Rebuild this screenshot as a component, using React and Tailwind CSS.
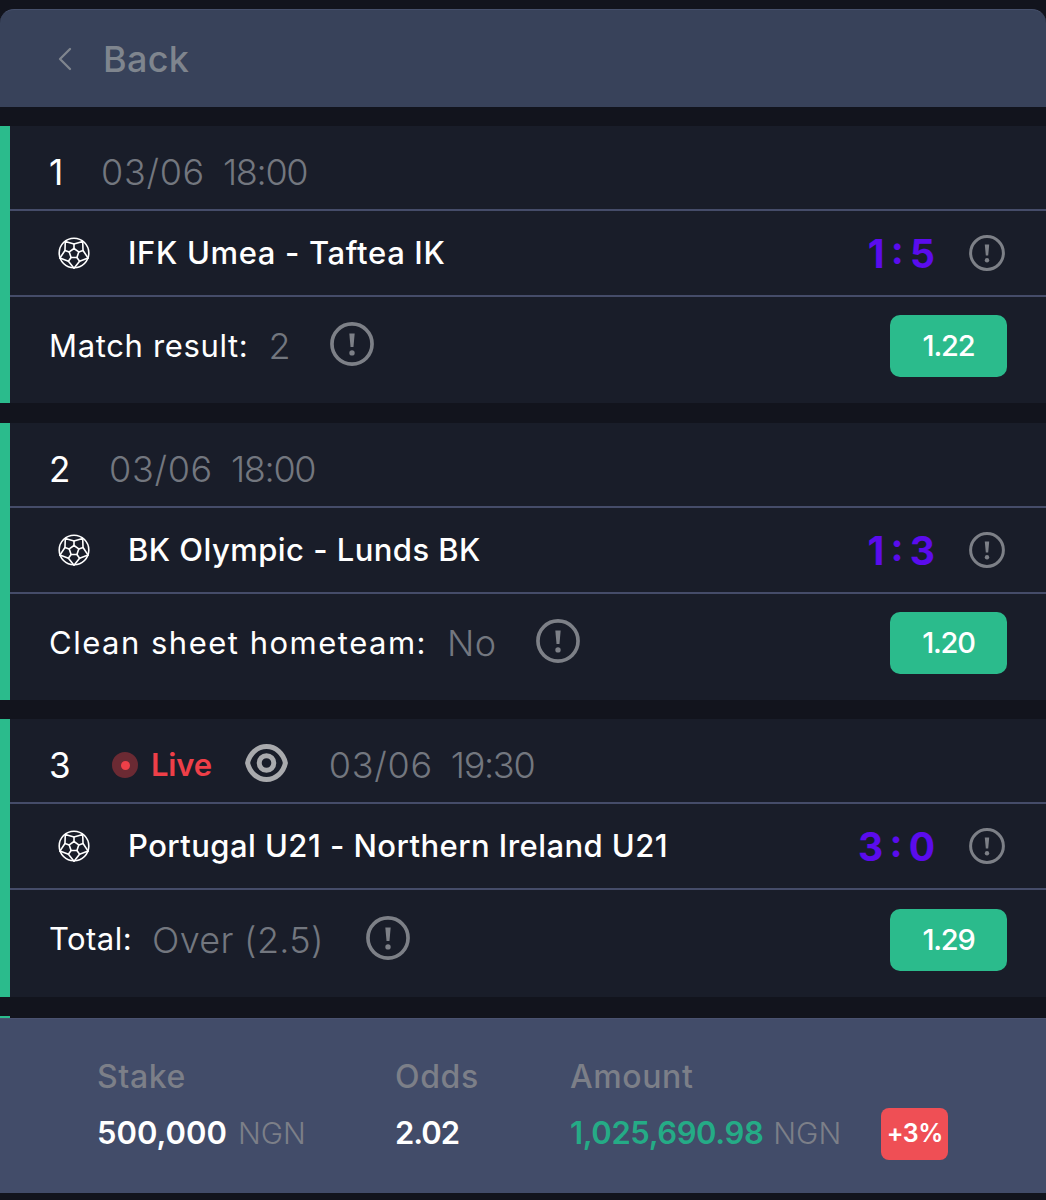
import React from 'react';
import { ChevronLeft } from 'lucide-react';

function Ball() {
  return (
    <svg width="32" height="32" viewBox="0 0 32 32" fill="none" stroke="white" strokeWidth="1.6" strokeLinejoin="round" strokeLinecap="round">
      <circle cx="16" cy="16" r="14.8" />
      <path d="M16 11.500l4.760 3.450-1.820 5.600h-5.880l-1.820-5.600z" />
      <path d="M16 11.500V7M20.760 14.950l4.280-1.390M18.940 20.550l2.640 3.640M13.060 20.550l-2.640 3.640M11.240 14.950l-4.280-1.390" />
      <path d="M7.300 4.500L16 7l8.700-2.500M24.700 4.500l.34 9.060 5.060 7.540M30.100 21.100l-8.520 3.090L16 31.300M16 31.300l-5.580-7.110-8.520-3.090M1.900 21.100l5.060-7.540.34-9.060" />
    </svg>
  );
}

function Alert({ size = 36 }) {
  return (
    <svg width={size} height={size} viewBox="0 0 36 36" fill="none">
      <circle cx="18" cy="18" r="16.400" stroke="#7d8087" strokeWidth="3" />
      <path d="M15.800 9.500h4.400l-1 11h-2.400z" fill="#7d8087" />
      <circle cx="18" cy="25.300" r="2.200" fill="#7d8087" />
    </svg>
  );
}

function Eye() {
  return (
    <svg width="43" height="38" viewBox="0 0 43 38" fill="none">
      <path d="M2.600 19C4.500 10 12 2.600 21.500 2.600S38.500 10 40.400 19C38.500 28 31 35.400 21.500 35.400S4.500 28 2.600 19z" stroke="#a9aaad" strokeWidth="5" strokeLinejoin="round" />
      <circle cx="21.500" cy="19" r="7.300" stroke="#a9aaad" strokeWidth="5" />
    </svg>
  );
}

function LiveBadge() {
  return (
    <div className="ml-[22px] flex items-center">
      <span className="flex h-[26px] w-[26px] items-center justify-center rounded-full bg-[#6b2a33]">
        <span className="h-[9px] w-[9px] rounded-full bg-[#ee3f48]" />
      </span>
      <span className="ml-[13px] text-[31px] font-semibold tracking-[-0.2px] text-[#ee3f48]">Live</span>
      <span className="ml-[33px] -mt-1"><Eye /></span>
    </div>
  );
}

function Bet({ num, numW, date, time, live, home, homeT, score, market, marketT, pick, alertGap, odds, cardH = 'h-[277px]' }) {
  return (
    <div className={`flex border-l-[10px] border-[#2bbb8c] bg-[#191d29] ${cardH}`}>
      <div className="flex min-w-0 flex-1 flex-col">
        <div className="flex h-[83px] items-center pl-[39px] pt-[9px]">
          <span className={`text-[35px] text-white ${numW}`}>{num}</span>
          {live && <LiveBadge />}
          <span className={`flex gap-[18px] text-[36px] font-light text-[#73777f] ${live ? 'ml-[41px]' : 'ml-[10px]'}`}>
            <span className="tracking-[0.7px]">{date}</span>
            <span className="tracking-[-1.3px]">{time}</span>
          </span>
        </div>
        <div className="flex h-[88px] items-center border-y-2 border-[#454c69] pl-[48px] pr-[41px]">
          <Ball />
          <span className={`ml-[38px] text-[31px] font-medium text-white ${homeT}`}>{home}</span>
          <span className="ml-auto text-[39px] font-bold leading-none text-[#5b0ced] [word-spacing:-3px]">{score}</span>
          <span className="ml-[34px]"><Alert /></span>
        </div>
        <div className="flex flex-1 items-center pb-2 pl-[39px] pr-[39px]">
          <span className={`text-[31px] text-white ${marketT}`}>{market}</span>
          <span className="ml-5 text-[36px] font-light tracking-[0.3px] text-[#73777f]">{pick}</span>
          <span className={`-mt-1 ${alertGap}`}><Alert size={44} /></span>
          <span className="ml-auto flex h-[62px] w-[117px] items-center justify-center rounded-[10px] bg-[#2bbb8c] text-[29px] font-medium tracking-[-1.2px] text-white">{odds}</span>
        </div>
      </div>
    </div>
  );
}

export default function App() {
  return (
    <div className="flex h-[1200px] w-[1046px] flex-col overflow-hidden bg-[#12141d] pt-[9px] font-['Inter',sans-serif]">
      <header className="flex h-[98px] shrink-0 items-center rounded-t-[14px] border-t border-[#46506b] bg-[#38425a] pl-[45px]">
        <ChevronLeft size={40} strokeWidth={1.4} className="text-[#7f858e]" />
        <span className="ml-[18px] text-[36px] font-medium tracking-[0.3px] text-[#7f858e]">Back</span>
      </header>

      <main className="mt-[19px] flex flex-col">
        <Bet num="1" numW="w-[42px]" date="03/06" time="18:00" home="IFK Umea - Taftea IK" homeT="tracking-[0.65px]" score="1 : 5" market="Match result:" marketT="tracking-[0.65px]" pick="2" alertGap="ml-[39px]" odds="1.22" />
        <div className="mt-5">
          <Bet num="2" numW="w-[50px]" date="03/06" time="18:00" home="BK Olympic - Lunds BK" homeT="tracking-[0.45px]" score="1 : 3" market="Clean sheet hometeam:" marketT="tracking-[1.5px]" pick="No" alertGap="ml-[40px]" odds="1.20" />
        </div>
        <div className="mt-[19px]">
          <Bet num="3" numW="w-[41px]" live date="03/06" time="19:30" home="Portugal U21 - Northern Ireland U21" homeT="tracking-[0.44px]" score="3 : 0" market="Total:" marketT="tracking-[0.45px]" pick="Over (2.5)" alertGap="ml-[42px]" odds="1.29" cardH="h-[278px]" />
        </div>
        <div className="mt-[19px] h-[2px] w-[10px] bg-[#2bbb8c]" />
      </main>

      <footer className="flex h-[175px] shrink-0 items-start border-t border-[#4a5270] bg-[#424c69] pl-[97px] pt-[34px]">
        <div className="w-[298px]">
          <div className="text-[32px] font-medium tracking-[0.6px] text-[#7c7f88]">Stake</div>
          <div className="mt-[9px] flex items-baseline">
            <span className="text-[31px] font-semibold text-white">500,000</span>
            <span className="ml-[11px] text-[30px] font-light text-[#7c7f88]">NGN</span>
          </div>
        </div>
        <div className="w-[175px]">
          <div className="text-[32px] font-medium tracking-[0.6px] text-[#7c7f88]">Odds</div>
          <div className="mt-[9px] text-[31px] font-semibold tracking-[-1px] text-white">2.02</div>
        </div>
        <div>
          <div className="text-[32px] font-medium tracking-[0.6px] text-[#7c7f88]">Amount</div>
          <div className="mt-[9px] flex items-baseline">
            <span className="text-[31px] font-semibold tracking-[-0.4px] text-[#25ab86]">1,025,690.98</span>
            <span className="ml-[10px] text-[30px] font-light text-[#7c7f88]">NGN</span>
          </div>
        </div>
        <span className="ml-[40px] mt-[55px] flex h-[52px] w-[67px] items-center justify-center rounded-[8px] bg-[#ef4f55] text-[25px] font-semibold tracking-[-0.5px] text-white">+3%</span>
      </footer>
    </div>
  );
}
